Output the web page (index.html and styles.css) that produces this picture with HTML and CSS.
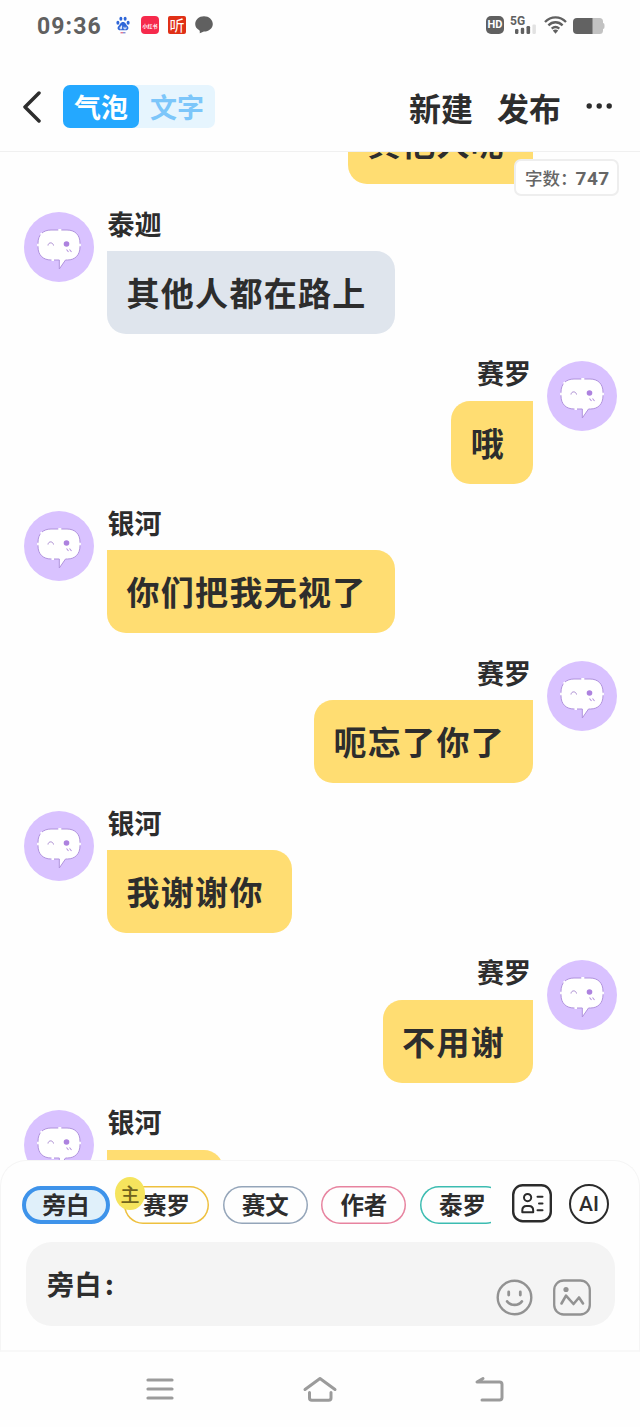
FILE: index.html
```html
<!DOCTYPE html>
<html lang="zh-CN">
<head>
<meta charset="utf-8">
<title>气泡</title>
<link rel="stylesheet" href="styles.css">
</head>
<body>
<svg class="defs" width="0" height="0" aria-hidden="true">
  <symbol id="face" viewBox="0 0 70 70">
    <path d="M27 18H43C51 18 56 23 56 31V35C56 43 51 48 43.500 48H41.500L35.300 57V48H27C19 48 14 43 14 35V31C14 23 19 18 27 18Z" fill="#fff" stroke="#b093dc" stroke-width="1"/>
    <path d="M34.300 18H37.300M14 31.800V34.200M56 31.800V34.200M27.500 48H30M16.500 22.700L18 21.200" stroke="#fff" stroke-width="1.800"/>
    <path d="M24 33.500C24.300 30 29 30 29.500 33.500" fill="none" stroke="#a98bd0" stroke-width="1"/>
    <circle cx="42.500" cy="32" r="2.800" fill="#ad82df"/>
    <path d="M42.500 37.500L44.500 40M45.500 37.500L47.500 40" stroke="#b795df" stroke-width="1.100"/>
  </symbol>
</svg>
<div class="screen">
  <div class="status">
    <span class="clock">09:36</span>
    <svg class="st-paw" width="14" height="18" viewBox="0 0 14 18">
      <g fill="#2f66d8"><ellipse cx="1.900" cy="6.700" rx="1.500" ry="2"/><ellipse cx="4.900" cy="2.700" rx="1.500" ry="2"/><ellipse cx="9.100" cy="2.700" rx="1.500" ry="2"/><ellipse cx="12.100" cy="6.700" rx="1.500" ry="2"/><path d="M7 6C9.500 6 9.800 8.500 11.500 10C13.500 12 12 14.600 9.500 14.200H4.500C2 14.600.500 12 2.500 10C4.200 8.500 4.500 6 7 6Z"/></g>
      <path d="M5.600 9.500V12.800H4.200V11H5.600M8 10.800V12.800H10V10.800" fill="none" stroke="#fff" stroke-width=".9"/>
      <path d="M4.500 16.800H7" stroke="#d64269" stroke-width="1"/><path d="M7 16.800H9.500" stroke="#5364c8" stroke-width="1"/>
    </svg>
    <span class="app-icon red">小红书</span>
    <span class="app-icon orange">听</span>
    <svg class="st-chat" width="18" height="18" viewBox="0 0 18 18"><path d="M9 .3C14 .3 17.800 3.700 17.800 8C17.800 12.200 14 15.600 9 15.600C8 15.600 6.500 17 4.700 17.200C5 16 4.800 15 4.300 14.300C1.800 12.900.2 10.700.2 8C.2 3.700 4 .3 9 .3Z" fill="#606060"/></svg>
    <div class="status-right">
      <span class="hd">HD</span>
      <span class="signal"><span class="g5">5G</span>
        <svg width="26" height="18" viewBox="0 0 26 18"><g fill="#606060"><rect x="5" y="13" width="3.400" height="5" rx="1.200"/><rect x="10.800" y="11.800" width="3.400" height="6.200" rx="1.200"/><rect x="16.500" y="10" width="3.600" height="8" rx="1.200"/></g><rect x="22.400" y="8.500" width="3.500" height="9.500" rx="1.200" fill="#e2e2e2"/></svg>
      </span>
      <svg class="wifi" width="23" height="18" viewBox="0 0 23 18"><g fill="none" stroke="#606060" stroke-width="2.300"><path d="M1 6C7-.3 16-.3 22 6"/><path d="M4.400 9.400C8.500 5.200 14.500 5.200 18.600 9.400"/><path d="M7.700 12.700C10 10.600 13 10.600 15.300 12.700"/></g><path d="M8.800 14.600Q11.500 12.600 14.200 14.600L11.500 17.800Z" fill="#606060"/></svg>
      <svg class="battery" width="32" height="16" viewBox="0 0 32 16"><path d="M4 0H26.500Q30 0 30 3.500V5Q31.500 5 31.500 7V9Q31.500 11 30 11V12.500Q30 16 26.500 16H4Z" fill="#c2c2c2"/><path d="M19.500 0H4Q0 0 0 4V12Q0 16 4 16H19.500Z" fill="#626262"/></svg>
    </div>
  </div>
  <header class="bar">
    <svg class="back" width="20" height="32" viewBox="0 0 20 32"><path d="M17 2L3 16L17 30" fill="none" stroke="#2d2d2d" stroke-width="3.500" stroke-linecap="round" stroke-linejoin="round"/></svg>
    <div class="tabs"><span class="tab on">气泡</span><span class="tab">文字</span></div>
    <span class="action">新建</span><span class="action second">发布</span>
    <svg class="more" width="28" height="8" viewBox="0 0 28 8"><g fill="#2d2d2d"><circle cx="3.200" cy="4" r="2.700"/><circle cx="13.200" cy="4" r="2.700"/><circle cx="23.200" cy="4" r="2.700"/></g></svg>
  </header>
  <main class="chat">
    <div class="count">字数：<span class="num">747</span></div>
    <div class="list">
      <div class="msg right"><svg class="avatar"><use href="#face"/></svg><div class="body"><div class="name"></div><div class="bubble">其他人呢</div></div></div>
      <div class="msg"><svg class="avatar"><use href="#face"/></svg><div class="body"><div class="name">泰迦</div><div class="bubble gray">其他人都在路上</div></div></div>
      <div class="msg right"><svg class="avatar"><use href="#face"/></svg><div class="body"><div class="name">赛罗</div><div class="bubble">哦</div></div></div>
      <div class="msg"><svg class="avatar"><use href="#face"/></svg><div class="body"><div class="name">银河</div><div class="bubble">你们把我无视了</div></div></div>
      <div class="msg right"><svg class="avatar"><use href="#face"/></svg><div class="body"><div class="name">赛罗</div><div class="bubble">呃忘了你了</div></div></div>
      <div class="msg"><svg class="avatar"><use href="#face"/></svg><div class="body"><div class="name">银河</div><div class="bubble">我谢谢你</div></div></div>
      <div class="msg right"><svg class="avatar"><use href="#face"/></svg><div class="body"><div class="name">赛罗</div><div class="bubble">不用谢</div></div></div>
      <div class="msg"><svg class="avatar"><use href="#face"/></svg><div class="body"><div class="name">银河</div><div class="bubble clipped"></div></div></div>
    </div>
  </main>
  <section class="composer">
    <div class="roles">
      <div class="chips">
        <span class="chip active">旁白</span>
        <span class="chip gold">赛罗<span class="badge">主</span></span>
        <span class="chip slate">赛文</span>
        <span class="chip pink">作者</span>
        <span class="chip teal">泰罗</span>
      </div>
      <svg class="cast" width="40" height="39" viewBox="0 0 40 39"><g fill="none" stroke="#2b2b2b" stroke-linecap="round" stroke-linejoin="round"><rect x="1.200" y="1.200" width="37.600" height="36" rx="9.500" stroke-width="2.400"/><g stroke-width="2"><circle cx="15.600" cy="13.600" r="3.600"/><path d="M10.300 28.200V26.500Q10.300 22 14.500 22H17Q21.200 22 21.200 26.500V28.200Z"/><path d="M25.500 12.700H30.500M27 19.500H30.500M25.500 26.200H30.500"/></g></g></svg>
      <span class="ai">AI</span>
    </div>
    <div class="input">
      <span class="hint">旁白<span class="colon">:</span></span>
      <svg class="smile" width="37" height="37" viewBox="0 0 37 37"><g fill="none" stroke="#929292" stroke-linecap="round"><circle cx="18.500" cy="18.500" r="16.800" stroke-width="2.400"/><path d="M12.700 13V16M24.300 13V16" stroke-width="2.800"/><path d="M11.200 22.500C14.500 27 22.500 27 25.800 22.500" stroke-width="2.800"/></g></svg>
      <svg class="image" width="38" height="37" viewBox="0 0 38 37"><g fill="none" stroke="#929292" stroke-linecap="round" stroke-linejoin="round"><rect x="1.200" y="1.500" width="35.600" height="34" rx="9.500" stroke-width="2.300"/><path d="M8.500 24.500L13 16.700L20.500 25L26 18.500L30 24.500" stroke-width="2.600"/></g><circle cx="13" cy="10.500" r="2.600" fill="#929292"/></svg>
    </div>
  </section>
  <nav class="nav">
    <svg width="28" height="24" viewBox="0 0 28 24"><path d="M2 3H26M2 12H26M2 21H26" stroke="#9b9b9b" stroke-width="3.200" stroke-linecap="round"/></svg>
    <svg class="home" width="36" height="28" viewBox="0 0 36 28"><g fill="none" stroke="#9b9b9b" stroke-width="3" stroke-linecap="round" stroke-linejoin="round"><path d="M3 14.500L18 3.500L33 14.500"/><path d="M7.500 17.500V23Q7.500 25.300 9.800 25.300H26.700Q29 25.300 29 23V17.500"/></g></svg>
    <svg width="32" height="28" viewBox="0 0 32 28"><path d="M10 3.500L4 7H26.500Q29 7 29 9.500V22.500Q29 25 26.500 25H9" fill="none" stroke="#9b9b9b" stroke-width="3" stroke-linecap="round" stroke-linejoin="round"/></svg>
  </nav>
</div>
</body>
</html>
```
FILE: styles.css
```css
* { box-sizing: border-box; }
body {
  margin: 0;
  background: #fefefe;
  color: #2d2d2d;
  font-family: "Noto Sans CJK SC", sans-serif;
  font-weight: 700;
}
svg { display: block; flex: none; }
.defs { position: absolute; }
.screen {
  width: 640px;
  height: 1427px;
  display: flex;
  flex-direction: column;
  overflow: hidden;
}

/* Status bar */
.status {
  height: 50px;
  flex: none;
  display: flex;
  align-items: center;
  padding: 0 35px 0 37px;
  color: #606060;
}
.clock {
  width: 79px;
  font: 700 23px/30px Roboto, sans-serif;
  letter-spacing: 1.1px;
  margin-top: 3px;
}
.app-icon {
  width: 18px;
  height: 18px;
  border-radius: 4px;
  color: #fff;
  display: flex;
  align-items: center;
  justify-content: center;
  white-space: nowrap;
}
.red { background: #f6294c; font-size: 5px; margin-left: 11px; }
.orange { background: #e03016; font-size: 15px; line-height: 18px; font-weight: 400; border-radius: 2px; margin-left: 9px; }
.st-chat { margin-left: 9px; }
.status-right { margin-left: auto; display: flex; align-items: center; }
.hd {
  width: 18px;
  height: 18px;
  border-radius: 5px;
  background: #606060;
  color: #fff;
  font: 700 11px/18px Roboto, sans-serif;
  text-align: center;
  margin-right: 6px;
}
.signal { position: relative; width: 26px; margin-right: 8px; }
.g5 {
  position: absolute;
  left: 0;
  top: -1px;
  font: 700 12px/12px Roboto, sans-serif;
}
.wifi { margin-right: 6px; }
.battery { margin-top: 2px; }

/* Header */
.bar {
  height: 102px;
  flex: none;
  display: flex;
  align-items: center;
  padding: 12px 26px 0 22px;
  border-bottom: 1px solid #f0f0f0;
}
.back { margin-top: 1px; }
.tabs {
  display: flex;
  width: 152px;
  height: 43px;
  margin-left: 21px;
  margin-right: 194px;
  border-radius: 7px;
  background: #e6f5fe;
}
.tab {
  width: 76px;
  font-size: 27px;
  line-height: 44px;
  text-align: center;
  border-radius: 7px;
  color: #7cc6fa;
}
.tab.on { background: #24a8ff; color: #fff; }
.action { font-size: 32px; line-height: 44px; white-space: nowrap; }
.second { margin-left: 24px; }
.more { margin: -1px 0 0 auto; }

/* Conversation */
.chat {
  position: relative;
  height: 1008px;
  flex: none;
  overflow: hidden;
}
.count {
  position: absolute;
  z-index: 1;
  top: 7px;
  right: 21px;
  width: 105px;
  height: 37px;
  padding-left: 9px;
  border: 2px solid #eee;
  border-radius: 7px;
  background: #fff;
  color: #666;
  font-size: 17.500px;
  font-weight: 500;
  line-height: 33px;
  white-space: nowrap;
}
.num { font-family: Roboto, sans-serif; font-weight: 700; font-size: 19px; letter-spacing: .5px; margin-left: -2px; }
.list { display: flex; flex-direction: column; gap: 27.500px; margin-top: -90.300px; padding: 0 23.500px; }
.msg { display: flex; gap: 13.500px; height: 122.300px; flex: none; }
.right { flex-direction: row-reverse; }
.avatar { width: 70px; height: 70px; border-radius: 50%; background: #d9c2ff; }
.body { display: flex; flex-direction: column; align-items: flex-start; }
.right .body { align-items: flex-end; }
.name { height: 39.300px; font-size: 27px; line-height: 24px; padding-left: .5px; }
.right .name { padding-right: 2px; }
.bubble {
  height: 83px;
  border-radius: 0 19px 19px 19px;
  background: #ffdd72;
  padding: 0 28px 0 19.500px;
  font-size: 33px;
  line-height: 82px;
  letter-spacing: 1.300px;
  white-space: nowrap;
}
.right .bubble { border-radius: 19px 0 19px 19px; }
.bubble.gray { background: #dfe5ed; }
.clipped { width: 116px; }

/* Composer */
.composer {
  height: 192px;
  flex: none;
  border: 1px solid #f5f5f5;
  border-bottom: 2px solid #f8f8f8;
  border-radius: 26px 26px 0 0;
  padding: 15px 24px 0 21px;
}
.roles { display: flex; height: 58px; align-items: center; }
.chips { display: flex; width: 469px; height: 58px; align-items: center; overflow: hidden; }
.chip {
  position: relative;
  flex: none;
  width: 85px;
  height: 38px;
  margin-right: 13.700px;
  border-radius: 19px;
  font-size: 23.500px;
  line-height: 37px;
  text-align: center;
}
.chip.active {
  width: 88px;
  margin-right: 14px;
  border: 4px solid #3e93ea;
  background: #e0f0fa;
  line-height: 29px;
}
.gold { box-shadow: inset 0 0 0 1.500px #eec03e; }
.slate { box-shadow: inset 0 0 0 1.500px #94a5b9; }
.pink { box-shadow: inset 0 0 0 1.500px #e7839f; }
.teal { box-shadow: inset 0 0 0 1.500px #3cbcb1; }
.badge {
  position: absolute;
  left: -9px;
  top: -9px;
  width: 30px;
  height: 33px;
  border-radius: 50%;
  background: #f5e45d;
  color: #70631c;
  font-size: 19px;
  font-weight: 500;
  line-height: 33px;
}
.cast { margin-left: 21px; margin-top: -3px; }
.ai {
  width: 40px;
  height: 40px;
  margin: -3px 0 0 17px;
  border: 2.500px solid #2b2b2b;
  border-radius: 50%;
  font: 500 21px/36px Roboto, sans-serif;
  text-align: center;
  flex: none;
}
.input {
  height: 84px;
  margin: 8px 0 0 4px;
  border-radius: 26px;
  background: #f4f4f4;
  display: flex;
  align-items: center;
  padding: 0 24px 0 21px;
}
.hint { font-size: 27px; line-height: 40px; margin-right: auto; letter-spacing: .5px; }
.colon { margin-left: 3px; }
.smile { margin: 26px 20px 0 0; }
.image { margin-top: 26px; }

/* System navigation */
.nav {
  height: 75px;
  flex: none;
  display: flex;
  justify-content: space-between;
  align-items: center;
  padding: 0 135px 1px 146px;
}
.home { margin-right: 8px; }
```
